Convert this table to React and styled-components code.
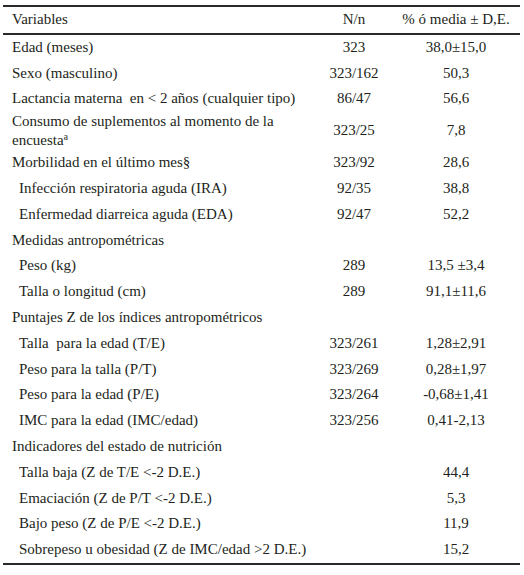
import styled, { createGlobalStyle } from 'styled-components';

const GlobalStyle = createGlobalStyle`
  body {
    margin: 0;
    background: #fff;
    font-family: "Liberation Serif", "Times New Roman", serif;
    color: #231f20;
  }
`;

const Table = styled.div`
  width: 517px;
  margin: 5px 0 0 3px;
  border-top: 2px solid #2a2a2a;
  border-bottom: 2px solid #2a2a2a;
  font-size: 15px;
  line-height: 19px;
`;

const Row = styled.div`
  display: grid;
  grid-template-columns: 320px 62px 1fr;
  align-items: center;
  min-height: ${(p) => (p.$head ? '25.5px' : '25.8px')};
  border-bottom: ${(p) => (p.$head ? '2px solid #2a2a2a' : 'none')};
`;

const Label = styled.div`
  padding-left: ${(p) => (p.$indent ? '16px' : '9px')};
  white-space: pre-wrap;
`;

const Cell = styled.div`
  text-align: center;
  padding-left: ${(p) => (p.$last ? '7px' : '0')};
  white-space: nowrap;
`;

const rows = [
  { label: 'Edad (meses)', n: '323', v: '38,0±15,0' },
  { label: 'Sexo (masculino)', n: '323/162', v: '50,3' },
  { label: 'Lactancia materna  en < 2 años (cualquier tipo)', n: '86/47', v: '56,6' },
  { label: 'Consumo de suplementos al momento de la encuestaª', n: '323/25', v: '7,8' },
  { label: 'Morbilidad en el último mes§', n: '323/92', v: '28,6' },
  { label: 'Infección respiratoria aguda (IRA)', n: '92/35', v: '38,8', indent: true },
  { label: 'Enfermedad diarreica aguda (EDA)', n: '92/47', v: '52,2', indent: true },
  { label: 'Medidas antropométricas' },
  { label: 'Peso (kg)', n: '289', v: '13,5 ±3,4', indent: true },
  { label: 'Talla o longitud (cm)', n: '289', v: '91,1±11,6', indent: true },
  { label: 'Puntajes Z de los índices antropométricos' },
  { label: 'Talla  para la edad (T/E)', n: '323/261', v: '1,28±2,91', indent: true },
  { label: 'Peso para la talla (P/T)', n: '323/269', v: '0,28±1,97', indent: true },
  { label: 'Peso para la edad (P/E)', n: '323/264', v: '-0,68±1,41', indent: true },
  { label: 'IMC para la edad (IMC/edad)', n: '323/256', v: '0,41-2,13', indent: true },
  { label: 'Indicadores del estado de nutrición' },
  { label: 'Talla baja (Z de T/E <-2 D.E.)', n: '', v: '44,4', indent: true },
  { label: 'Emaciación (Z de P/T <-2 D.E.)', n: '', v: '5,3', indent: true },
  { label: 'Bajo peso (Z de P/E <-2 D.E.)', n: '', v: '11,9', indent: true },
  { label: 'Sobrepeso u obesidad (Z de IMC/edad >2 D.E.)', n: '', v: '15,2', indent: true },
];

export default function App() {
  return (
    <>
      <GlobalStyle />
      <Table>
        <Row $head>
          <Label>Variables</Label>
          <Cell>N/n</Cell>
          <Cell $last>% ó media ± D,E.</Cell>
        </Row>
        {rows.map((r) => (
          <Row key={r.label}>
            <Label $indent={r.indent}>{r.label}</Label>
            <Cell>{r.n}</Cell>
            <Cell $last>{r.v}</Cell>
          </Row>
        ))}
      </Table>
    </>
  );
}
